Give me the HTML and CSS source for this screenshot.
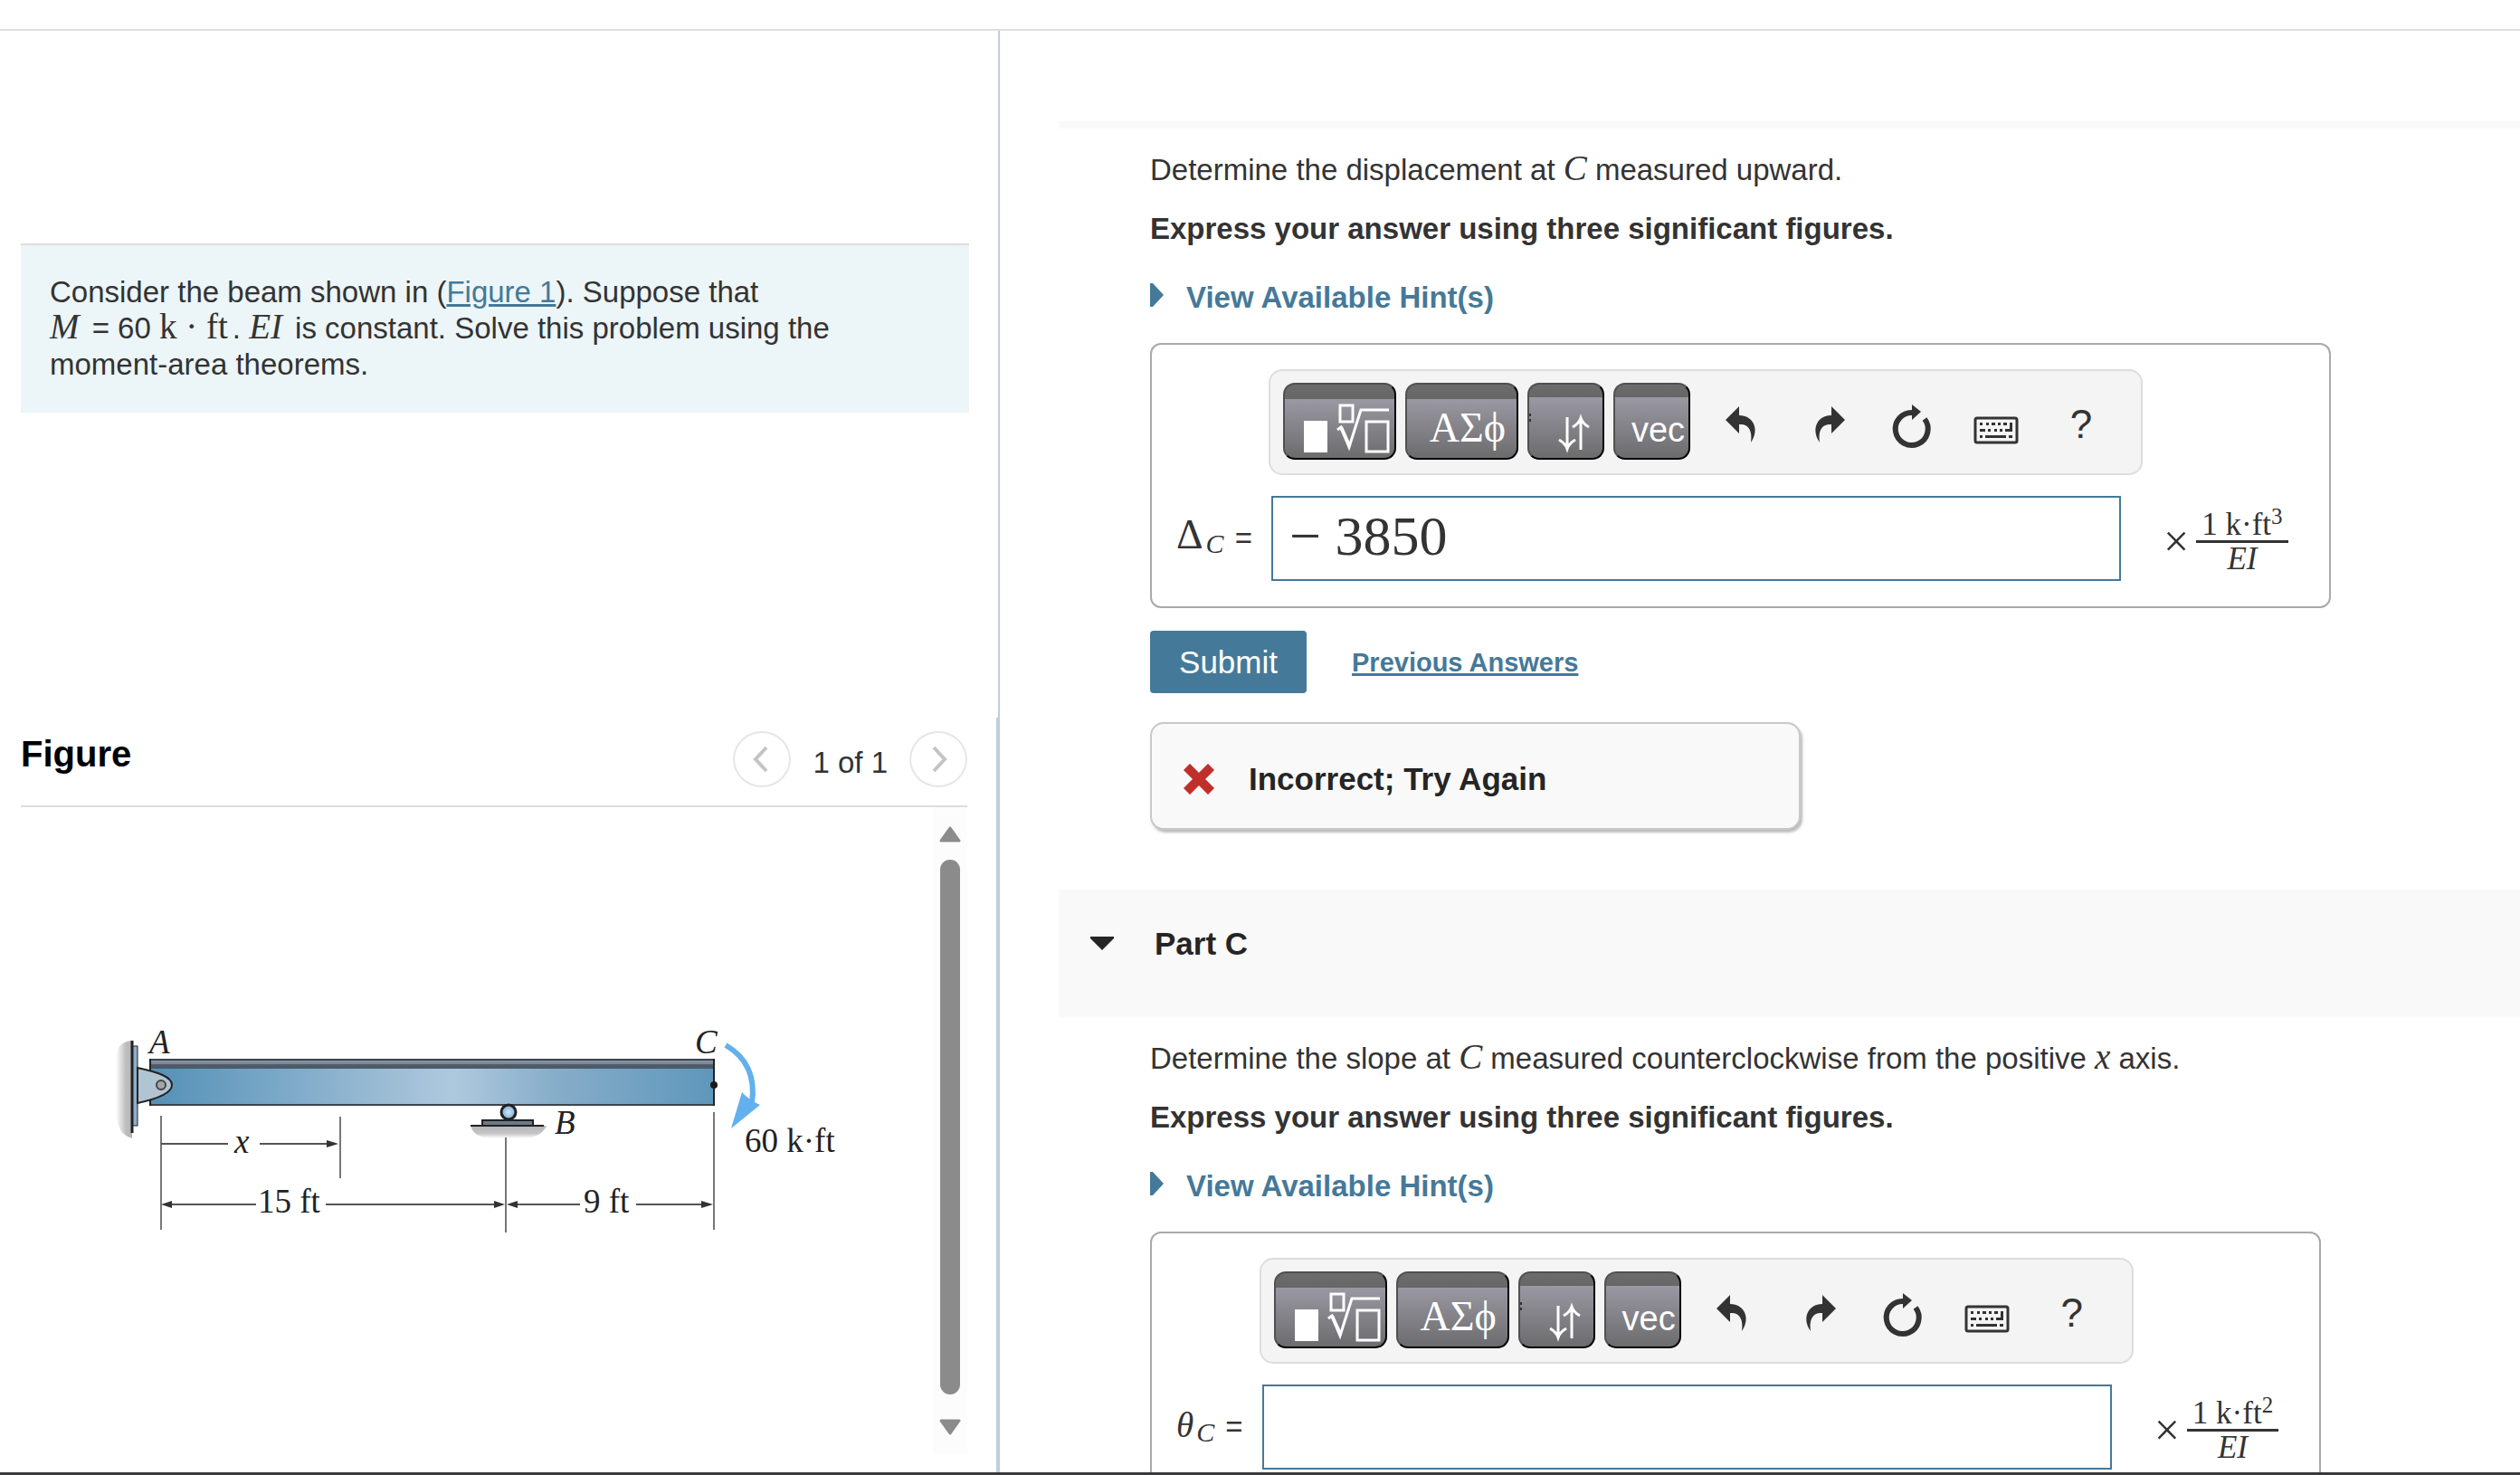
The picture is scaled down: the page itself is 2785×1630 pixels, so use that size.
FILE: index.html
```
<!DOCTYPE html>
<html lang="en">
<head>
    <meta charset="UTF-8">
    <meta name="viewport" content="width=device-width, initial-scale=1.0">
    <title>Beam Displacement and Slope</title>
    <link rel="stylesheet" href="styles.css">
</head>
<body>

    <!-- Shared icons -->
    <svg class="icon-defs" aria-hidden="true">
        <symbol id="icon-root" viewBox="0 0 121 81">
            <rect x="21" y="40" width="26" height="35" fill="#fff"/>
            <g fill="none" stroke="#fff" stroke-width="3">
                <rect x="61" y="23" width="14" height="18"/>
                <rect x="90" y="41" width="24" height="33"/>
                <path d="M58 50L62 47L71 69L84 28H115"/>
                <path d="M62 47L71 67" stroke-width="4"/>
            </g>
        </symbol>
        <symbol id="icon-arrows" viewBox="0 0 81 81">
            <path d="M0 32h2v3h-2zM0 38h2v3h-2z" fill="#333"/>
            <path d="M42 36V70M33 61Q40 65 42 71Q44 65 51 61M57 72V38M48 47Q55 43 57 37Q59 43 66 47" fill="none" stroke="#fff" stroke-width="3"/>
        </symbol>
        <symbol id="icon-undo" viewBox="0 0 60 60">
            <path d="M13 25L28 10V20C44 20 51 36 41 50C43 36 38 29 28 30V40Z" fill="#333"/>
        </symbol>
        <symbol id="icon-redo" viewBox="0 0 60 60">
            <path d="M51 25L36 10V20C20 20 13 36 23 50C21 36 26 29 36 30V40Z" fill="#333"/>
        </symbol>
        <symbol id="icon-reset" viewBox="0 0 60 60">
            <path d="M32 17A18 18 0 1 0 45 24" fill="none" stroke="#333" stroke-width="6"/>
            <path d="M31 8L41 16L31 25Z" fill="#333"/>
        </symbol>
        <symbol id="icon-keyboard" viewBox="0 0 60 60">
            <rect x="7" y="23" width="46" height="27" rx="2" fill="none" stroke="#333" stroke-width="3"/>
            <path d="M12 28h3v3h-3zM19 28h3v3h-3zM25 28h4v3h-4zM32 28h3v3h-3zM38 28h4v3h-4zM45 28h3v10h-8v-3h5zM12 35h6v3h-6zM21 35h3v3h-3zM28 35h3v3h-3zM34 35h3v3h-3zM12 42h3v3h-3zM18 42h23v3h-23zM44 42h4v3h-4z" fill="#333"/>
        </symbol>
    </svg>

    <header class="top-bar"></header>

    <main class="layout">

        <div class="left-pane">
            <section class="intro">
                <div class="intro-box">
                    Consider the beam shown in (<a href="#figure">Figure 1</a>). Suppose that<br>
                    <i class="math">M</i> = 60 <span class="math">k · ft</span>. <i class="math">EI</i> is constant. Solve this problem using the moment-area theorems.
                </div>
            </section>

            <section class="figure" id="figure">
                <div class="figure-header">
                    <h2>Figure</h2>
                    <div class="pager">
                        <button class="page-button" aria-label="Previous figure">
                            <svg viewBox="0 0 60 58" width="60" height="58"><path d="M35 16L23 29L35 42" fill="none" stroke="#c4c4c4" stroke-width="4"/></svg>
                        </button>
                        <span class="page-count">1 of 1</span>
                        <button class="page-button" aria-label="Next figure">
                            <svg viewBox="0 0 60 58" width="60" height="58"><path d="M25 16L37 29L25 42" fill="none" stroke="#c4c4c4" stroke-width="4"/></svg>
                        </button>
                    </div>
                </div>
                <div class="figure-body">
                    <div class="drawing">
                        <svg class="beam" viewBox="100 1130 840 240" role="img" aria-label="Beam ABC with a moment applied at C">
                            <defs>
                                <linearGradient id="beamFill">
                                    <stop offset="0" stop-color="#5390b6"/>
                                    <stop offset="0.14" stop-color="#6b9fc1"/>
                                    <stop offset="0.4" stop-color="#98bad3"/>
                                    <stop offset="0.54" stop-color="#aec9de"/>
                                    <stop offset="0.72" stop-color="#86adc9"/>
                                    <stop offset="1" stop-color="#5e97bb"/>
                                </linearGradient>
                                <linearGradient id="flange" x2="0" y2="1">
                                    <stop offset="0" stop-color="#8f9aaa"/>
                                    <stop offset="0.5" stop-color="#7c8796"/>
                                    <stop offset="0.6" stop-color="#4d5a68"/>
                                    <stop offset="1" stop-color="#4d5a68"/>
                                </linearGradient>
                                <linearGradient id="wall">
                                    <stop offset="0" stop-color="#fff"/>
                                    <stop offset="0.6" stop-color="#bfbfc1"/>
                                    <stop offset="1" stop-color="#b5b5b8"/>
                                </linearGradient>
                                <linearGradient id="ground" x2="0" y2="1">
                                    <stop offset="0" stop-color="#b5b5b8"/>
                                    <stop offset="0.6" stop-color="#c4c4c6"/>
                                    <stop offset="1" stop-color="#fff"/>
                                </linearGradient>
                                <radialGradient id="ball">
                                    <stop offset="0" stop-color="#d5e9f7"/>
                                    <stop offset="1" stop-color="#70aad3"/>
                                </radialGradient>
                            </defs>
                            <!-- pin support at A -->
                            <path d="M146 1149Q128 1150 128 1170V1225Q128 1252 146 1257Z" fill="url(#wall)"/>
                            <rect x="165" y="1170" width="624" height="50" fill="url(#beamFill)"/>
                            <rect x="166" y="1169" width="623" height="11" fill="url(#flange)"/>
                            <path d="M165 1170H789M165 1220H789" stroke="#3c444c" stroke-width="2"/>
                            <path d="M166 1169V1221M789 1169V1221" stroke="#222" stroke-width="2"/>
                            <path d="M146 1149V1251" stroke="#222" stroke-width="3"/>
                            <rect x="147" y="1155" width="5" height="88" fill="#8fb0c9" stroke="#222"/>
                            <path d="M152 1179C175 1184 190 1189 190 1198S175 1213 152 1218Z" fill="#b0c4d2" stroke="#222" stroke-width="2"/>
                            <circle cx="178" cy="1198" r="5" fill="#a5a5a5" stroke="#444" stroke-width="2"/>
                            <!-- roller support at B -->
                            <path d="M520 1243H604Q598 1257 575 1257H545Q524 1257 520 1243Z" fill="url(#ground)"/>
                            <path d="M520 1243H601" stroke="#222" stroke-width="2"/>
                            <rect x="533" y="1237" width="56" height="6" fill="#6b7a86" stroke="#222" stroke-width="2"/>
                            <circle cx="562" cy="1228" r="8" fill="url(#ball)" stroke="#222" stroke-width="3"/>
                            <circle cx="789" cy="1198" r="4" fill="#1b1b1b"/>
                            <!-- dimensions -->
                            <path d="M178 1232V1358M376 1233V1301M559 1256V1361M789 1228V1358" fill="none" stroke="#777" stroke-width="2"/>
                            <path d="M178 1263H252M287 1263H368M184 1330H283M360 1330H554M563 1330H641M703 1330H784" fill="none" stroke="#555" stroke-width="2"/>
                            <path d="M374 1263L361 1259V1267ZM178 1330L190 1326V1334ZM558 1330L546 1326V1334ZM560 1330L572 1326V1334ZM788 1330L775 1326V1334Z" fill="#333"/>
                            <!-- applied moment -->
                            <path d="M802 1154C826 1168 835 1190 831 1218" fill="none" stroke="#62b0ee" stroke-width="6"/>
                            <path d="M808 1246L820 1206Q828 1215 840 1220Z" fill="#62b0ee"/>
                            <g class="beam-text">
                                <text class="italic" x="165" y="1163">A</text>
                                <text class="italic" x="613" y="1252">B</text>
                                <text class="italic" x="768" y="1163">C</text>
                                <text class="italic" x="259" y="1273">x</text>
                                <text x="285" y="1339">15 ft</text>
                                <text x="645" y="1339">9 ft</text>
                                <text x="823" y="1272">60 k·ft</text>
                            </g>
                        </svg>
                    </div>
                    <div class="scrollbar">
                        <svg viewBox="0 0 24 18" width="24" height="18"><path d="M12 2L22 16H2Z" fill="#8b8b8b" stroke="#8b8b8b" stroke-width="3" stroke-linejoin="round"/></svg>
                        <div class="thumb"></div>
                        <svg viewBox="0 0 24 18" width="24" height="18"><path d="M12 16L22 2H2Z" fill="#8b8b8b" stroke="#8b8b8b" stroke-width="3" stroke-linejoin="round"/></svg>
                    </div>
                </div>
            </section>
        </div>

        <div class="right-pane">
            <div class="part-strip"></div>
            <section class="part">
                <p>Determine the displacement at <i class="math">C</i> measured upward.</p>
                <p class="instructions">Express your answer using three significant figures.</p>
                <button class="hints">
                    <svg viewBox="0 0 15 26" width="15" height="26"><path d="M0 0H3L15 13L3 26H0Z" fill="#457999"/></svg>
                    View Available Hint(s)
                </button>

                <div class="answer-box">
                    <div class="toolbar">
                        <button class="tool wide" aria-label="Templates"><svg><use href="#icon-root"/></svg></button>
                        <button class="tool wide greek">ΑΣϕ</button>
                        <button class="tool" aria-label="Arrows"><svg><use href="#icon-arrows"/></svg></button>
                        <button class="tool vec">vec</button>
                        <div class="actions">
                            <button class="action" aria-label="Undo"><svg><use href="#icon-undo"/></svg></button>
                            <button class="action" aria-label="Redo"><svg><use href="#icon-redo"/></svg></button>
                            <button class="action" aria-label="Reset"><svg><use href="#icon-reset"/></svg></button>
                            <button class="action" aria-label="Keyboard shortcuts"><svg><use href="#icon-keyboard"/></svg></button>
                            <button class="action">?</button>
                        </div>
                    </div>
                    <label class="symbol" for="answerB"><span class="math"><span class="delta">Δ</span><sub><i>C</i></sub></span> =</label>
                    <div class="entry">
                        <input type="text" id="answerB" value="− 3850">
                        <span class="times">×</span>
                        <span class="fraction">
                            <span class="numerator">1 k·ft<sup>3</sup></span>
                            <i class="denominator">EI</i>
                        </span>
                    </div>
                </div>

                <div class="submit-row">
                    <button class="submit">Submit</button>
                    <a class="previous" href="#">Previous Answers</a>
                </div>

                <div class="feedback">
                    <svg viewBox="0 0 34 34" width="34" height="34"><path d="M7 7L27 27M27 7L7 27" stroke="#c12f2b" stroke-width="10" stroke-linecap="square"/></svg>
                    Incorrect; Try Again
                </div>
            </section>

            <h3 class="part-header">
                <svg viewBox="0 0 26 15" width="26" height="15"><path d="M0 0H26V2L13 15L0 2Z" fill="#252525"/></svg>
                Part C
            </h3>
            <section class="part">
                <p>Determine the slope at <i class="math">C</i> measured counterclockwise from the positive <i class="math">x</i> axis.</p>
                <p class="instructions">Express your answer using three significant figures.</p>
                <button class="hints">
                    <svg viewBox="0 0 15 26" width="15" height="26"><path d="M0 0H3L15 13L3 26H0Z" fill="#457999"/></svg>
                    View Available Hint(s)
                </button>

                <div class="answer-box">
                    <div class="toolbar">
                        <button class="tool wide" aria-label="Templates"><svg><use href="#icon-root"/></svg></button>
                        <button class="tool wide greek">ΑΣϕ</button>
                        <button class="tool" aria-label="Arrows"><svg><use href="#icon-arrows"/></svg></button>
                        <button class="tool vec">vec</button>
                        <div class="actions">
                            <button class="action" aria-label="Undo"><svg><use href="#icon-undo"/></svg></button>
                            <button class="action" aria-label="Redo"><svg><use href="#icon-redo"/></svg></button>
                            <button class="action" aria-label="Reset"><svg><use href="#icon-reset"/></svg></button>
                            <button class="action" aria-label="Keyboard shortcuts"><svg><use href="#icon-keyboard"/></svg></button>
                            <button class="action">?</button>
                        </div>
                    </div>
                    <label class="symbol" for="answerC"><span class="math"><i>θ</i><sub><i>C</i></sub></span> =</label>
                    <div class="entry">
                        <input type="text" id="answerC">
                        <span class="times">×</span>
                        <span class="fraction">
                            <span class="numerator">1 k·ft<sup>2</sup></span>
                            <i class="denominator">EI</i>
                        </span>
                    </div>
                </div>
            </section>
        </div>

    </main>

    <footer class="bottom-bar"></footer>

</body>
</html>
```

FILE: styles.css
```
:root {
    --text: #333;
    --accent: #457999;
    --rule: #ddd;
    --divider: #bfcde0;
    --sans: "Liberation Sans", Arial, sans-serif;
    --serif: "Liberation Serif", "Times New Roman", serif;
}

* {
    box-sizing: border-box;
}
body {
    margin: 0;
    height: 100vh;
    display: flex;
    flex-direction: column;
    overflow: hidden;
    background: #fff;
    color: var(--text);
    font-family: var(--sans);
    font-size: 33px;
    line-height: 40px;
}
button, input {
    font-family: inherit;
    margin: 0;
}
button {
    cursor: pointer;
}
svg {
    display: block;
    flex: none;
}
a {
    color: var(--accent);
    text-decoration-thickness: 3px;
}
.icon-defs {
    position: absolute;
    width: 0;
    height: 0;
}
.math {
    font-family: var(--serif);
    font-size: 39px;
    line-height: 0;
}

.top-bar {
    flex: none;
    height: 34px;
    border-bottom: 2px solid #dfdfdf;
}
.bottom-bar {
    flex: none;
    height: 3px;
    background: #3a3a3c;
}
.layout {
    flex: 1;
    min-height: 0;
    display: grid;
    grid-template-columns: 1105fr 1680fr;
}

/* Left side: problem text and figure */
.left-pane {
    display: grid;
    grid-template-rows: 1fr minmax(0, 1.1fr);
    min-height: 0;
}
.intro {
    padding: 235px 32px 0 23px;
    border-right: 2px solid var(--divider);
}
.intro-box {
    padding: 32px 32px 33px;
    background: #ecf5f7;
    border-top: 2px solid var(--rule);
}
.intro-box .math {
    margin-right: 5px;
}
.figure {
    display: flex;
    flex-direction: column;
    min-height: 0;
    padding: 15px 32px 21px 23px;
    border-right: 4px solid var(--divider);
}
.figure-header {
    display: flex;
    justify-content: space-between;
    height: 84px;
    border-bottom: 2px solid var(--rule);
}
.figure h2 {
    margin: 5px 0 0;
    font-size: 40px;
    line-height: 40px;
    color: #000;
}
.pager {
    display: flex;
    gap: 24px;
}
.page-button {
    width: 64px;
    height: 62px;
    padding: 0;
    border: 2px solid #e6e6e6;
    border-radius: 50%;
    background: #fff;
}
.page-count {
    padding-top: 15px;
}
.figure-body {
    flex: 1;
    min-height: 0;
    display: flex;
}
.drawing {
    flex: 1;
    padding: 239px 0 0 77px;
}
.beam {
    width: 840px;
    max-width: 100%;
}
.beam-text {
    font-family: var(--serif);
    font-size: 37px;
    fill: #222;
}
.italic {
    font-style: italic;
}
.scrollbar {
    width: 38px;
    padding: 21px 0 20px;
    display: flex;
    flex-direction: column;
    align-items: center;
    background: #fcfcfc;
}
.thumb {
    flex: 1;
    width: 22px;
    margin: 19px 0 27px;
    border-radius: 11px;
    background: #8b8b8b;
}

/* Right side: question parts */
.right-pane {
    min-width: 0;
    overflow: hidden;
    padding: 100px 0 0 65px;
}
.part-strip {
    height: 8px;
    background: #f9f9f9;
}
.part {
    display: flex;
    flex-direction: column;
    align-items: flex-start;
    padding: 26px 0 66px 101px;
}
.part p {
    margin: 0 0 25px;
}
.part .instructions {
    margin-bottom: 36px;
    font-weight: bold;
}
.hints {
    display: flex;
    gap: 25px;
    padding: 0;
    margin-bottom: 30px;
    border: none;
    background: none;
    color: var(--accent);
    font-size: 33px;
    font-weight: bold;
    line-height: 40px;
}
.hints svg {
    margin-top: 4px;
}
.part-header {
    display: flex;
    align-items: center;
    gap: 45px;
    height: 141px;
    margin: 0;
    padding: 0 35px 22px;
    background: #f9f9f9;
    color: #252525;
    font-size: 35px;
}

.answer-box {
    display: grid;
    grid-template-columns: auto auto;
    row-gap: 23px;
    padding: 27px 45px 28px 27px;
    border: 2px solid #a9a9a9;
    border-radius: 12px;
}
.toolbar {
    grid-column: 2;
    justify-self: start;
    display: flex;
    gap: 10px;
    padding: 13px 36px 15px 14px;
    background: #f4f4f4;
    border: 2px solid var(--rule);
    border-radius: 15px;
}
.tool {
    display: flex;
    width: 85px;
    height: 85px;
    padding: 0;
    border: 2px solid;
    border-color: #505050 #000 #000 #505050;
    border-radius: 13px;
    background: linear-gradient(#6c6c6c, #666 14px, #9a98a2 14px, #6c6c6e);
    color: #fff;
    overflow: hidden;
}
.tool.wide {
    width: 125px;
    background: linear-gradient(#6c6c6c, #666 16px, #9a98a2 16px, #6c6c6e);
}
.tool svg {
    width: 100%;
    height: 100%;
}
.tool.greek {
    justify-content: flex-end;
    padding: 22px 12px 0 0;
    font-family: var(--serif);
    font-size: 46px;
    line-height: 52px;
}
.tool.vec {
    justify-content: flex-end;
    padding: 28px 4px 0 0;
    font-size: 38px;
    line-height: 44px;
}
.actions {
    display: flex;
    gap: 34px;
    margin-left: 16px;
    padding-top: 16px;
}
.action {
    width: 60px;
    height: 60px;
    padding: 0;
    border: none;
    background: none;
    color: var(--text);
    font-size: 44px;
    line-height: 52px;
}
.action svg {
    width: 60px;
    height: 60px;
}
.symbol {
    align-self: center;
    padding-right: 18px;
}
.symbol .math {
    margin-right: 3px;
}
.symbol .delta {
    font-size: 46px;
}
.symbol sub {
    margin-left: 3px;
    font-size: 30px;
    vertical-align: -5px;
}
.entry {
    display: flex;
    align-items: center;
    padding-left: 3px;
}
.entry input {
    width: 939px;
    height: 94px;
    padding: 0 18px 6px;
    border: 2px solid var(--accent);
    background: #fff;
    color: var(--text);
    font-family: var(--serif);
    font-size: 62px;
}
.times {
    margin: 6px 8px 0 47px;
    font-family: var(--serif);
    font-size: 50px;
}
.fraction {
    display: flex;
    flex-direction: column;
    margin-top: 6px;
    font-family: var(--serif);
    font-size: 35px;
    line-height: 35px;
    text-align: center;
}
.numerator {
    padding: 0 6px;
    border-bottom: 3px solid var(--text);
}
.numerator sup {
    font-size: 25px;
    line-height: 0;
    vertical-align: 12px;
}

.submit-row {
    display: flex;
    align-items: center;
    gap: 50px;
    margin: 25px 0 32px;
}
.submit {
    width: 173px;
    height: 69px;
    padding: 0;
    border: none;
    border-radius: 4px;
    background: var(--accent);
    color: #fff;
    font-size: 35px;
}
.previous {
    font-size: 29px;
    font-weight: bold;
}
.feedback {
    display: flex;
    align-items: center;
    gap: 38px;
    width: 719px;
    height: 119px;
    padding: 7px 35px 0;
    border: 2px solid #c8c8c8;
    border-radius: 15px;
    background: #f9f9f9;
    box-shadow: 2px 3px 3px #bbb;
    color: #252525;
    font-size: 35px;
    font-weight: bold;
}
```
